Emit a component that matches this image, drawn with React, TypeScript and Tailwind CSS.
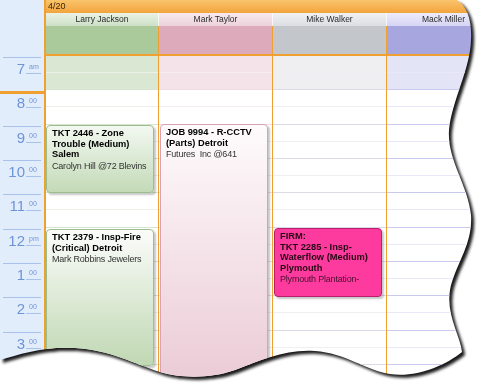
const hours = [
  { h: '7', m: 'am', size: 34, off: true },
  { h: '8', m: '00', size: 35, off: false },
  { h: '9', m: '00', size: 34, off: false },
  { h: '10', m: '00', size: 34, off: false },
  { h: '11', m: '00', size: 35, off: false },
  { h: '12', m: 'pm', size: 34, off: false },
  { h: '1', m: '00', size: 34, off: false },
  { h: '2', m: '00', size: 35, off: false },
  { h: '3', m: '00', size: 34, off: false },
  { h: '4', m: '00', size: 35, off: false },
];

interface Appt {
  top: number;
  height: number;
  left: number;
  box: string;
  title: string[];
  sub: string;
  subColor: string;
}

interface Person {
  name: string;
  width: string;
  head: string;
  allDay: string;
  offHours: string;
  hourLine: string;
  halfLine: string;
  appts: Appt[];
}

const people: Person[] = [
  {
    name: 'Larry Jackson',
    width: 'w-[113px]',
    head: 'bg-linear-to-b from-[#eaf2e6] to-[#cde0c5]',
    allDay: 'bg-[#abca9c]',
    offHours: 'bg-[#d9e7d3]',
    hourLine: 'border-[#d6e4d0]',
    halfLine: 'border-[#ebf1e8]',
    appts: [
      {
        top: 69,
        height: 68,
        left: 0,
        box: 'border-[#9cbd8e] bg-linear-to-b from-[#f3f8f1] to-[#c3dab7] text-black',
        title: ['TKT 2446 - Zone', 'Trouble (Medium)', 'Salem'],
        sub: 'Carolyn Hill @72 Blevins',
        subColor: 'text-[#333]',
      },
      {
        top: 173,
        height: 137,
        left: 0,
        box: 'border-[#9cbd8e] bg-linear-to-b from-[#fbfcfa] to-[#c0d8b3] text-black',
        title: ['TKT 2379 - Insp-Fire', '(Critical) Detroit'],
        sub: 'Mark Robbins Jewelers',
        subColor: 'text-[#333]',
      },
    ],
  },
  {
    name: 'Mark Taylor',
    width: 'w-[114px]',
    head: 'bg-linear-to-b from-[#f8e9ee] to-[#ecd2db]',
    allDay: 'bg-[#dcaabb]',
    offHours: 'bg-[#f4e4ea]',
    hourLine: 'border-[#f0dce3]',
    halfLine: 'border-[#f7edf1]',
    appts: [
      {
        top: 68,
        height: 300,
        left: 1,
        box: 'border-[#d6a3b4] bg-linear-to-b from-[#fefbfc] via-[#f3dfe6] to-[#e7c3d0] text-black',
        title: ['JOB 9994 - R-CCTV', '(Parts) Detroit'],
        sub: 'Futures  Inc @641',
        subColor: 'text-[#333]',
      },
    ],
  },
  {
    name: 'Mike Walker',
    width: 'w-[114px]',
    head: 'bg-linear-to-b from-[#f0f1f3] to-[#dcdee2]',
    allDay: 'bg-[#c3c6cb]',
    offHours: 'bg-[#efeff2]',
    hourLine: 'border-[#dadbe6]',
    halfLine: 'border-[#f0f0f4]',
    appts: [
      {
        top: 172,
        height: 69,
        left: 1,
        box: 'border-[#b8206c] bg-[#fd3b9e] text-[#240814]',
        title: ['FIRM:', 'TKT 2285 - Insp-', 'Waterflow (Medium)', 'Plymouth'],
        sub: 'Plymouth Plantation-',
        subColor: 'text-[#4a1030]',
      },
    ],
  },
  {
    name: 'Mack Miller',
    width: 'w-[114px]',
    head: 'bg-linear-to-b from-[#ececfb] to-[#d6d5f4]',
    allDay: 'bg-[#a7a6de]',
    offHours: 'bg-[#e4e4f7]',
    hourLine: 'border-[#cacaf0]',
    halfLine: 'border-[#e8e8f9]',
    appts: [],
  },
];

function TimeColumn() {
  return (
    <div className="w-[44px] shrink-0 bg-[#e2edfc]">
      <div className="h-[57px]" />
      {hours.map((row, i) => (
        <div key={row.h} className="px-[3px]" style={{ height: row.size }}>
          <div
            className={
              i === 1
                ? 'flex h-full border-t-[3px] border-[#f0a030] -mx-[3px] px-[3px]'
                : 'flex h-full border-t border-[#a8c2ec]'
            }
          >
            <div className={i === 1 ? 'w-[23px] pt-[1px] pr-[1px] text-right text-[15px] leading-none text-[#6f94d6]' : 'w-[23px] pt-[3px] pr-[1px] text-right text-[15px] leading-none text-[#6f94d6]'}>
              {row.h}
            </div>
            <div className={i === 1 ? 'h-[14px] w-[15px] border-b border-[#a8c2ec] pt-[3px] pl-[3px] text-[7px] leading-none text-[#6f94d6]' : 'h-[16px] w-[15px] border-b border-[#a8c2ec] pt-[5px] pl-[3px] text-[7px] leading-none text-[#6f94d6]'}>
              {row.m}
            </div>
          </div>
        </div>
      ))}
    </div>
  );
}

function AppointmentBox({ appt }: { appt: Appt }) {
  return (
    <div
      className={`absolute w-[108px] overflow-hidden rounded-[4px] border px-[5px] pt-[2px] shadow-[2px_2px_2px_rgba(0,0,0,0.22)] ${appt.box}`}
      style={{ top: appt.top, height: appt.height, left: appt.left }}
    >
      <div className="text-[9.3px] font-bold leading-[10.5px]">
        {appt.title.map((line) => (
          <div key={line}>{line}</div>
        ))}
      </div>
      <div className={`mt-[1px] whitespace-pre text-[9px] leading-[10px] tracking-[-0.2px] ${appt.subColor}`}>
        {appt.sub}
      </div>
    </div>
  );
}

function PersonColumn({ person, last }: { person: Person; last: boolean }) {
  return (
    <div className={`${person.width} shrink-0 flex flex-col`}>
      <div className={`h-[13px] border-r border-white/70 text-center text-[8.5px] leading-[13px] text-[#2a2a2a] ${person.head}`}>
        {person.name}
      </div>
      <div className={`flex flex-col ${last ? '' : 'border-r border-[#f0a030]'}`}>
        <div className={`h-[28px] ${person.allDay}`} />
        <div className="h-[2px] bg-[#f0a030]" />
        <div className="relative">
          {hours.map((row) => (
            <div
              key={row.h}
              className={`border-b ${person.hourLine} ${row.off ? person.offHours : 'bg-white'}`}
              style={{ height: row.size }}
            >
              <div className={`h-[17px] border-b ${person.halfLine}`} />
            </div>
          ))}
          {person.appts.map((appt) => (
            <AppointmentBox key={appt.title[0]} appt={appt} />
          ))}
        </div>
      </div>
    </div>
  );
}

export default function App() {
  return (
    <div className="relative h-[388px] w-[485px] overflow-hidden bg-white font-['Liberation_Sans',Arial,sans-serif]">
      <svg width="0" height="0" className="absolute">
        <defs>
          <clipPath id="torn">
            <path d="M0,0 H457 C467,6 472,20 471,40 C470,70 452,100 449,130 C447,160 468,185 471,215 C473,245 455,265 450,290 C446,315 460,335 462,352 C445,366 415,378 390,374 C368,371 345,353 315,351 C285,349 262,360 235,370 C210,379 180,378 160,372 C135,364 110,350 75,348 C45,346 20,354 0,360 Z" />
          </clipPath>
        </defs>
      </svg>
      <div className="[filter:drop-shadow(3px_3px_1.5px_rgba(0,0,0,0.9))]">
        <div className="flex h-[388px] w-[485px] overflow-hidden [clip-path:url(#torn)]">
          <TimeColumn />
          <div className="flex flex-col border-l-2 border-[#f0a030]">
            <div className="h-[13px] w-[460px] bg-linear-to-b from-[#f9c46c] to-[#f2a43a] pl-[2px] text-[9px] leading-[13px] text-[#3a2608]">
              4/20
            </div>
            <div className="h-px bg-[#fbe3b8]" />
            <div className="flex">
              {people.map((p, i) => (
                <PersonColumn key={p.name} person={p} last={i === people.length - 1} />
              ))}
            </div>
          </div>
        </div>
      </div>
    </div>
  );
}
